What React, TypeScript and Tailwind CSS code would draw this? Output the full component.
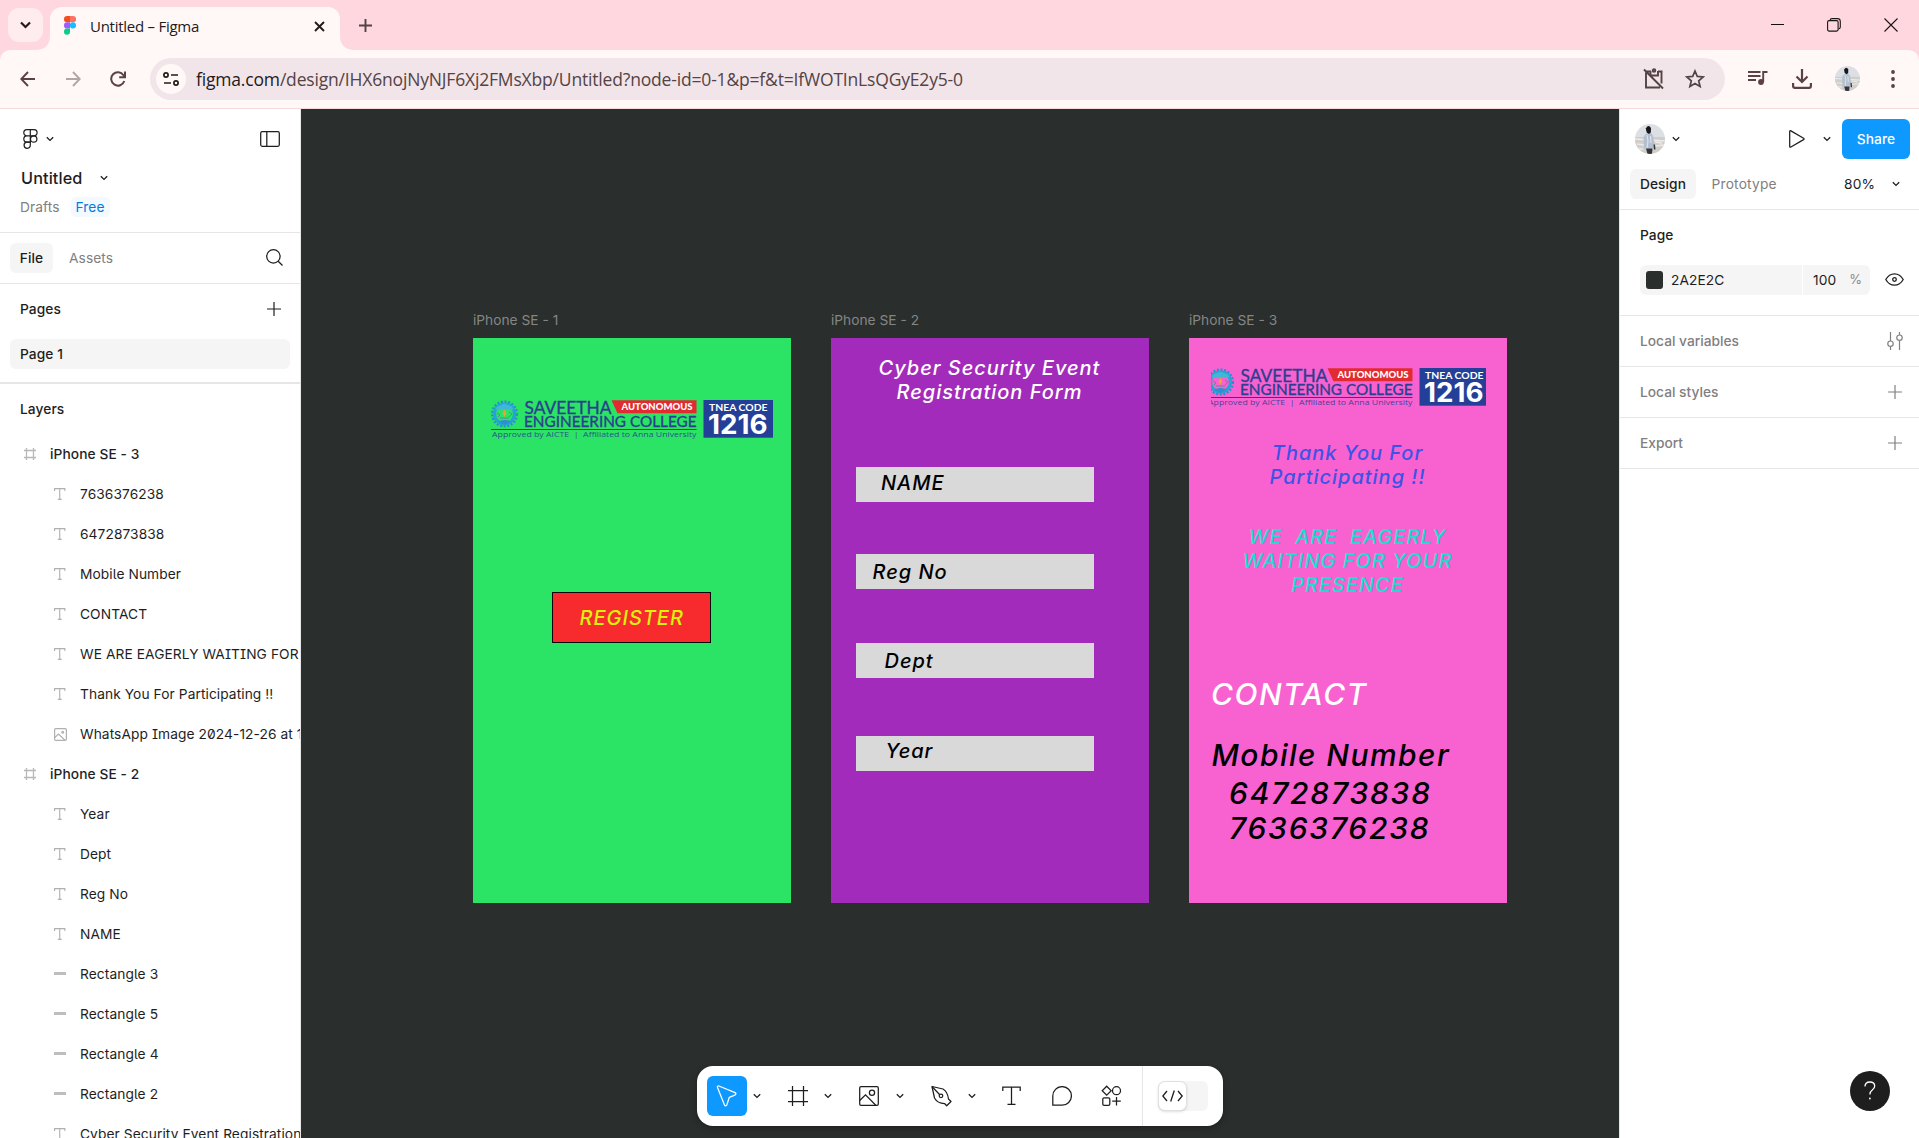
import React from "react";

type IconProps = { className?: string };

const Chevron = ({ className = "" }: IconProps) => (
  <svg width="8" height="6" viewBox="0 0 8 6" fill="none" stroke="currentColor" strokeWidth="1.3" className={className}>
    <path d="M0.8 1.2 4 4.4 7.2 1.2" />
  </svg>
);

const Plus = ({ className = "" }: IconProps) => (
  <svg width="14" height="14" viewBox="0 0 14 14" fill="none" stroke="currentColor" strokeWidth="1.2" className={className}>
    <path d="M7 0v14M0 7h14" />
  </svg>
);

const Avatar = ({ size, id }: { size: number; id: string }) => (
  <svg width={size} height={size} viewBox="0 0 30 30">
    <defs>
      <clipPath id={id}>
        <circle cx="15" cy="15" r="15" />
      </clipPath>
    </defs>
    <g clipPath={`url(#${id})`}>
      <rect width="30" height="30" fill="#dcdfe4" />
      <rect y="13" width="30" height="17" fill="#d0cecb" />
      <path d="M0 15 30 17M2 20 10 21M20 22 30 21M20 18 27 19M0 25h8" stroke="#ecebe9" strokeWidth="1.3" />
      <path d="M8.500 14Q9 10.500 12 9.500L15.500 9Q18 10 18.500 14L19.500 24.500H9Z" fill="#b4c0cf" />
      <path d="M12 11 13 17 12 24M15.500 12 16 19" stroke="#dde5ee" strokeWidth="1.100" fill="none" />
      <path d="M10.800 4.500Q13.500 0 16 4L15.800 8.500 14 10 11.700 8.500Z" fill="#17181c" />
      <path d="M11 24.500H17.500L17 30H12.500ZM18.500 20.500 20 20.500 20.500 25.500 19 25.500Z" fill="#33353b" />
    </g>
  </svg>
);

function TabStrip() {
  return (
    <div className="flex h-[50px] w-full bg-[#ffd7de]">
      <div className="ml-2 mt-2 flex h-[34px] w-[35px] items-center justify-center rounded-[11px] bg-[#ffecee] text-[#231a1c]">
        <svg width="11" height="8" viewBox="0 0 11 8" fill="none" stroke="currentColor" strokeWidth="2.200">
          <path d="M1 1.500 5.500 6 10 1.500" />
        </svg>
      </div>
      <svg width="15" height="15" viewBox="0 0 15 15" className="-ml-2 mt-[35px]" fill="#fff8f6">
        <path d="M15 0V15H0Q15 15 15 0Z" />
      </svg>
      <div className="mt-[7px] flex h-[43px] w-[290px] items-center rounded-t-[12px] bg-[#fff8f6] pl-[14px] pr-[14px]">
        <svg width="12" height="19" viewBox="0 0 12 19" className="-mt-[6px]">
          <path d="M3.100 0H6V6.300H3.100A3.100 3.150 0 0 1 3.100 0Z" fill="#f24e1e" />
          <path d="M6 0H9A3.100 3.150 0 0 1 9 6.300H6Z" fill="#ff7262" />
          <path d="M3.100 6.300H6V12.600H3.100A3.100 3.150 0 0 1 3.100 6.300Z" fill="#a259ff" />
          <circle cx="9" cy="9.450" r="3.100" fill="#1abcfe" />
          <path d="M3.100 12.600H6V15.800A3 3.100 0 1 1 3.100 12.600Z" fill="#0acf83" />
        </svg>
        <span className="-mt-[5px] ml-[14px] whitespace-nowrap font-['Open_Sans'] text-[15px] tracking-[-0.26px] text-[#231a1c]">
          Untitled – Figma
        </span>
        <svg width="11" height="11" viewBox="0 0 11 11" className="-mt-[4px] ml-auto mr-px" stroke="#231a1c" strokeWidth="1.900">
          <path d="M1 1 10 10M10 1 1 10" />
        </svg>
      </div>
      <svg width="15" height="15" viewBox="0 0 15 15" className="mt-[35px]" fill="#fff8f6">
        <path d="M0 0V15H15Q0 15 0 0Z" />
      </svg>
      <svg width="13" height="13" viewBox="0 0 13 13" className="ml-[4px] mt-[19px]" stroke="#534345" strokeWidth="1.900">
        <path d="M6.500 0V13M0 6.500H13" />
      </svg>
      <div className="ml-auto mr-[21px] mt-[18px] flex h-[13px] items-center">
        <svg width="13" height="13" viewBox="0 0 13 13" stroke="#111" strokeWidth="1">
          <path d="M0 6.500H13" />
        </svg>
        <svg width="14" height="14" viewBox="0 0 14 14" className="ml-[43px]" fill="none" stroke="#1a1516" strokeWidth="1.100">
          <rect x="0.600" y="2.600" width="10.500" height="10.500" rx="1.500" />
          <path d="M3 2.500Q3.200 0.600 5 0.600H10.500Q13.300 0.600 13.300 3.400V9Q13.300 10.800 11.500 11" />
        </svg>
        <svg width="14" height="14" viewBox="0 0 14 14" className="ml-[43px]" stroke="#1a1516" strokeWidth="1.100">
          <path d="M0.500 0.500 13.500 13.500M13.500 0.500 0.500 13.500" />
        </svg>
      </div>
    </div>
  );
}

function AddressBar() {
  return (
    <div className="h-[59px] w-full bg-[#ffd7de]">
      <div className="flex h-[59px] items-center rounded-t-[10px] border-b border-[#f5dadd] bg-[#fff8f6]">
        <svg width="16" height="16" viewBox="0 0 16 16" className="-mt-px ml-5" fill="none" stroke="#5b4045" strokeWidth="1.900">
          <path d="M15 8H1.500M8 1 1.300 8 8 15" />
        </svg>
        <svg width="16" height="16" viewBox="0 0 16 16" className="-mt-px ml-[29px]" fill="none" stroke="#b3a5a6" strokeWidth="1.900">
          <path d="M1 8H14.500M8 1 14.700 8 8 15" />
        </svg>
        <svg width="16" height="16" viewBox="0 0 16 16" className="-mt-px ml-[29px]" fill="none" stroke="#5b4045" strokeWidth="2">
          <path d="M14.300 10A6.700 6.700 0 1 1 13.500 4.200L15 6" />
          <path d="M15 0.500V6.300H9.200" />
        </svg>
        <div className="ml-6 flex h-[42px] w-[1575px] items-center rounded-full bg-[#f2e5e9] pl-[6px]">
          <div className="flex h-[30px] w-[30px] items-center justify-center rounded-full bg-[#fff8f6]">
            <svg width="16" height="14" viewBox="0 0 16 14" fill="none" stroke="#231a1c" strokeWidth="1.700">
              <circle cx="3" cy="3" r="2.100" />
              <path d="M8 3H15M1 11H8" />
              <circle cx="13" cy="11" r="2.100" />
            </svg>
          </div>
          <span className="ml-[10px] whitespace-nowrap font-['Open_Sans'] text-[17.500px] tracking-[-0.175px] text-[#534345]">
            <span className="text-[#231a1c]">figma.com</span>/design/IHX6nojNyNJF6Xj2FMsXbp/Untitled?node-id=0-1&amp;p=f&amp;t=IfWOTInLsQGyE2y5-0
          </span>
          <svg width="22" height="22" viewBox="0 0 22 22" className="ml-auto" fill="none" stroke="#534345" strokeWidth="1.900">
            <path d="M8 3.500H3.500M3 4.500V19.500H17M18.500 4V15.500M15 3.500H19.500M7.500 3V7.500H15V3M1 1.500 20 20.500" />
            <circle cx="11" cy="2.500" r="1.300" />
          </svg>
          <svg width="20" height="20" viewBox="0 0 20 20" className="ml-[20px] mr-5" fill="none" stroke="#534345" strokeWidth="1.700">
            <path d="M10 2 12.300 7.400 18.200 7.900 13.700 11.800 15.100 17.500 10 14.400 4.900 17.500 6.300 11.800 1.800 7.900 7.700 7.400Z" />
          </svg>
        </div>
        <svg width="20" height="16" viewBox="0 0 20 16" className="-mt-[3px] ml-[23px]" fill="none" stroke="#5b4045" strokeWidth="1.900">
          <path d="M0 2H12.500M0 6H12.500M0 10H8M15.200 12V2H19.500" />
          <circle cx="13" cy="12" r="2.900" fill="#5b4045" stroke="none" />
        </svg>
        <svg width="20" height="20" viewBox="0 0 20 20" className="-mt-px ml-6" fill="none" stroke="#5b4045" strokeWidth="2.200">
          <path d="M10 0V12M4.500 7.500 10 13 15.500 7.500M1.100 14V17Q1.100 18.900 3 18.900H17Q18.900 18.900 18.900 17V14" />
        </svg>
        <div className="-mt-[2px] ml-[23px]">
          <Avatar size={25} id="toolbar-avatar" />
        </div>
        <svg width="4" height="18" viewBox="0 0 4 18" className="-mt-px ml-[31px]" fill="#5b4045">
          <circle cx="2" cy="2" r="1.900" />
          <circle cx="2" cy="9" r="1.900" />
          <circle cx="2" cy="16" r="1.900" />
        </svg>
      </div>
    </div>
  );
}

type Layer = { kind: "frame" | "text" | "image" | "rect"; name: string };

const layers: Layer[] = [
  { kind: "frame", name: "iPhone SE - 3" },
  { kind: "text", name: "7636376238" },
  { kind: "text", name: "6472873838" },
  { kind: "text", name: "Mobile Number" },
  { kind: "text", name: "CONTACT" },
  { kind: "text", name: "WE ARE EAGERLY WAITING FOR YOUR PRESENCE" },
  { kind: "text", name: "Thank You For Participating !!" },
  { kind: "image", name: "WhatsApp Image 2024-12-26 at 11.50.07" },
  { kind: "frame", name: "iPhone SE - 2" },
  { kind: "text", name: "Year" },
  { kind: "text", name: "Dept" },
  { kind: "text", name: "Reg No" },
  { kind: "text", name: "NAME" },
  { kind: "rect", name: "Rectangle 3" },
  { kind: "rect", name: "Rectangle 5" },
  { kind: "rect", name: "Rectangle 4" },
  { kind: "rect", name: "Rectangle 2" },
  { kind: "text", name: "Cyber Security Event Registration Form" },
];

function LayerIcon({ kind }: { kind: Layer["kind"] }) {
  if (kind === "frame")
    return (
      <svg width="12" height="12" viewBox="0 0 12 12" stroke="#b8b8b8" strokeWidth="1.300">
        <path d="M2.500 0V12M9.500 0V12M0 2.500H12M0 9.500H12" />
      </svg>
    );
  if (kind === "text")
    return (
      <svg width="12" height="12" viewBox="0 0 12 12" fill="none" stroke="#b0b0b0" strokeWidth="1.100">
        <path d="M0.600 3V0.600H10.900V3M5.750 0.600V11.400M3.800 11.400H7.700" />
      </svg>
    );
  if (kind === "image")
    return (
      <svg width="13" height="13" viewBox="0 0 13 13" fill="none" stroke="#b0b0b0" strokeWidth="1.200">
        <rect x="0.600" y="0.600" width="11.800" height="11.800" rx="1.200" />
        <path d="M0.800 9.500 4.500 6 11 12.300" />
        <circle cx="8.700" cy="4.200" r="0.900" />
      </svg>
    );
  return <div className="mt-[-2px] h-[3px] w-3 bg-[#bdbdbd]" />;
}

function LeftPanel() {
  return (
    <aside className="flex h-full w-[301px] shrink-0 flex-col overflow-hidden border-r border-[#e6e6e6] bg-white font-['Inter'] text-[13.750px] tracking-[0.08px] text-[#1e1e1e]">
      <div className="h-[124px] shrink-0 border-b border-[#e6e6e6]">
        <div className="mt-5 flex h-[20px] items-center pl-[23px] pr-5">
          <svg width="15" height="20" viewBox="0 0 15 20" fill="none" stroke="#1e1e1e" strokeWidth="1.200">
            <path d="M7.300 0.700H3.900A3.100 3.100 0 0 0 3.900 6.900H7.300ZM7.300 0.700H11A3.100 3.100 0 0 1 11 6.900H7.300ZM7.300 6.900H3.900A3.100 3.100 0 0 0 3.900 13.100H7.300Z" />
            <path d="M3.900 13.100A3.100 3.100 0 1 0 7.300 16.100V13.100H3.900" />
            <circle cx="10.700" cy="10" r="3.200" />
          </svg>
          <Chevron className="ml-2" />
          <svg width="20" height="16" viewBox="0 0 20 16" className="ml-auto" fill="none" stroke="#1e1e1e" strokeWidth="1.250">
            <rect x="0.700" y="0.700" width="18.600" height="14.600" rx="1.500" />
            <path d="M6.800 0.700V15.300" />
          </svg>
        </div>
        <div className="mt-[19px] flex h-5 items-center pl-[21px]">
          <span className="text-[16.250px] font-[550] tracking-[0.1px]">Untitled</span>
          <Chevron className="ml-[18px]" />
        </div>
        <div className="mt-[9px] flex h-5 items-center pl-5">
          <span className="text-[#808080]">Drafts</span>
          <span className="ml-[11px] flex h-5 items-center rounded-[5px] bg-[#f2f9ff] px-[5px] text-[#007be5]">Free</span>
        </div>
      </div>
      <div className="flex h-[51px] shrink-0 items-center border-b border-[#e6e6e6] pl-[10px] pr-[17px]">
        <span className="flex h-[30px] w-[43px] items-center justify-center rounded-[6px] bg-[#f5f5f5] font-[550]">File</span>
        <span className="ml-4 text-[#808080]">Assets</span>
        <svg width="17" height="17" viewBox="0 0 17 17" className="-mt-[2px] ml-auto" fill="none" stroke="#1e1e1e" strokeWidth="1.250">
          <circle cx="7.400" cy="7.400" r="6.700" />
          <path d="M12.200 12.200 16.500 16.500" />
        </svg>
      </div>
      <div className="flex h-[50px] shrink-0 items-center justify-between pl-5 pr-[19px] font-[550]">
        Pages
        <Plus />
      </div>
      <div className="mx-[10px] mt-[5px] flex h-[30px] shrink-0 items-center rounded-[6px] bg-[#f5f5f5] pl-[10px] font-[450]">Page 1</div>
      <div className="mt-[13px] h-[2px] shrink-0 bg-[#e6e6e6]" />
      <div className="flex h-[50px] shrink-0 items-center pl-5 font-[550]">Layers</div>
      <div className="flex w-[480px] flex-col [font-feature-settings:'ss02']">
        {layers.map((l) => (
          <div key={l.name} className="flex h-10 shrink-0 items-center whitespace-nowrap">
            <div className={l.kind === "frame" ? "flex w-[50px] shrink-0 items-center pl-6" : "flex w-20 shrink-0 items-center pl-[54px]"}>
              <LayerIcon kind={l.kind} />
            </div>
            <span className={l.kind === "frame" ? "font-[550]" : "font-normal"}>{l.name}</span>
          </div>
        ))}
      </div>
    </aside>
  );
}

function RightPanel() {
  return (
    <aside className="relative flex h-full w-[300px] shrink-0 flex-col border-l border-[#e6e6e6] bg-white font-['Inter'] text-[13.750px] tracking-[0.08px] text-[#1e1e1e]">
      <div className="flex h-[60px] items-center pl-[15px] pr-[9px]">
        <Avatar size={30} id="panel-avatar" />
        <Chevron className="ml-[7px]" />
        <svg width="16" height="18" viewBox="0 0 16 18" className="ml-auto" fill="none" stroke="#1e1e1e" strokeWidth="1.250" strokeLinejoin="round">
          <path d="M0.700 1.500Q0.700 0.300 1.900 0.900L14.600 8.200Q15.600 8.900 14.600 9.600L1.900 17Q0.700 17.600 0.700 16.500Z" />
        </svg>
        <Chevron className="ml-[18px]" />
        <span className="ml-[11px] flex h-10 w-[68px] items-center justify-center rounded-[6px] bg-[#0d99ff] font-[550] text-white">Share</span>
      </div>
      <div className="flex h-[41px] shrink-0 border-b border-[#e6e6e6] pl-[10px] pr-[19px]">
        <span className="flex h-[30px] w-[66px] items-center justify-center rounded-[6px] bg-[#f5f5f5] font-[550]">Design</span>
        <span className="ml-[15.500px] mt-[5px] tracking-[0.200px] text-[#808080]">Prototype</span>
        <span className="ml-auto mt-[5px]">80%</span>
        <Chevron className="ml-[17px] mt-[12px]" />
      </div>
      <div className="h-[106px] shrink-0 border-b border-[#e6e6e6] pl-5 pr-[15px]">
        <div className="mt-[15px] font-[550]">Page</div>
        <div className="mt-[19px] flex h-[30px] items-center">
          <div className="flex h-[30px] w-[162px] items-center rounded-l-[6px] bg-[#f5f5f5] pl-[6px]">
            <span className="h-[18px] w-[17px] rounded-[3px] bg-[#2a2e2c]" />
            <span className="ml-2 mt-px">2A2E2C</span>
          </div>
          <div className="ml-px flex h-[30px] w-[67px] items-center justify-between rounded-r-[6px] bg-[#f5f5f5] pl-[10px] pr-[8px]">
            <span className="mt-px">100</span>
            <span className="mt-px text-[13px] text-[#8a8a8a]">%</span>
          </div>
          <svg width="19" height="13" viewBox="0 0 19 13" className="ml-auto" fill="none" stroke="#1e1e1e" strokeWidth="1.300">
            <path d="M0.800 6.500Q4 0.800 9.500 0.800T18.200 6.500Q15 12.200 9.500 12.200T0.800 6.500Z" />
            <circle cx="9.500" cy="6.500" r="1.800" />
          </svg>
        </div>
      </div>
      <div className="flex h-[51px] shrink-0 items-center justify-between border-b border-[#e6e6e6] pl-5 pr-4 text-[#808080]">
        <span className="font-[450] tracking-normal">Local variables</span>
        <svg width="16" height="18" viewBox="0 0 16 18" fill="none" stroke="currentColor" strokeWidth="1.200">
          <path d="M3.500 0V9M3.500 14.500V18M12.500 0V3M12.500 8.500V18" />
          <circle cx="3.500" cy="11.700" r="2.700" />
          <circle cx="12.500" cy="5.700" r="2.700" />
        </svg>
      </div>
      <div className="flex h-[51px] shrink-0 items-center justify-between border-b border-[#e6e6e6] pl-5 pr-[17px] text-[#808080]">
        <span className="font-[450] tracking-normal">Local styles</span>
        <Plus />
      </div>
      <div className="flex h-[51px] shrink-0 items-center justify-between border-b border-[#e6e6e6] pl-5 pr-[17px] text-[#808080]">
        <span className="font-[450] tracking-normal">Export</span>
        <Plus />
      </div>
      <div className="absolute bottom-[27px] right-[29px] flex h-10 w-10 items-center justify-center rounded-full bg-[#1e1e1e]">
        <svg width="12" height="20" viewBox="0 0 12 20" fill="none" stroke="white" strokeWidth="1.300">
          <path d="M1 5.500Q1 1 5.800 1T10.700 5Q10.700 7.300 8.300 9T5.900 13.500" />
          <circle cx="5.900" cy="17.500" r="0.900" fill="white" stroke="none" />
        </svg>
      </div>
    </aside>
  );
}

function CollegeLogo() {
  return (
    <svg width="282" height="40" viewBox="0 0 282 40">
      <circle cx="13.500" cy="14" r="12.300" fill="none" stroke="#2a8fd0" strokeWidth="2.600" strokeDasharray="2 1.600" />
      <circle cx="13.500" cy="14" r="10" fill="none" stroke="#25a3d6" strokeWidth="3.200" />
      <path d="M4.500 9.500H22.500L21 6.500 13.500 3.500 6 6.500Z" fill="#3fb7d8" />
      <path d="M7 21.500Q13.500 18.500 20 21.500L13.500 25Z" fill="#2d8fd2" />
      <path d="M13.500 9.500 15.500 13.500 13.500 17 11.500 13.500Z" fill="#e8a33c" />
      <path d="M6 13 9 15 7 17M18 12 21 14 18 17M9 18H18" stroke="#4f8f9c" strokeWidth="1" fill="none" />
      <g fill="#2a3f8f" fontFamily="Lato">
        <text x="33.500" y="13.700" fontSize="18" fontWeight="400" stroke="#2a3f8f" strokeWidth="0.350" textLength="87" lengthAdjust="spacingAndGlyphs">SAVEETHA</text>
        <text x="33" y="26.900" fontSize="15.300" fontWeight="400" stroke="#2a3f8f" strokeWidth="0.350" textLength="172.500" lengthAdjust="spacingAndGlyphs">ENGINEERING COLLEGE</text>
      </g>
      <path d="M0 29.500H205.500" stroke="#2a3f8f" strokeWidth="1" />
      <text x="1" y="37.300" fontSize="7.600" fontWeight="500" fill="#2a3f8f" fillOpacity="0.900" fontFamily="Open Sans" textLength="204.500" lengthAdjust="spacingAndGlyphs" xmlSpace="preserve">Approved by AICTE&#160; |&#160; Affiliated to Anna University</text>
      <path d="M120.500 0.300H205.500V13.300H126.500Z" fill="#e22b31" />
      <text x="130.500" y="10" fontSize="9.300" fontWeight="900" fill="white" fontFamily="Lato" textLength="71" lengthAdjust="spacingAndGlyphs">AUTONOMOUS</text>
      <rect x="212.500" y="0" width="69.500" height="37.700" fill="#233f97" />
      <text x="218" y="10.600" fontSize="9.500" fontWeight="700" fill="white" fontFamily="Lato" textLength="58.500" lengthAdjust="spacingAndGlyphs">TNEA CODE</text>
      <text x="217" y="33.800" fontSize="27" fontWeight="750" fill="white" fontFamily="Inter" textLength="59.500" lengthAdjust="spacingAndGlyphs">1216</text>
    </svg>
  );
}

function BottomToolbar() {
  return (
    <div className="absolute left-[396px] top-[957px] flex h-[60px] w-[526px] items-center rounded-[16px] bg-white text-[#1e1e1e] shadow-[0_2px_6px_rgba(0,0,0,0.3)]">
      <div className="ml-[10px] flex h-10 w-10 shrink-0 items-center justify-center rounded-[6px] bg-[#0d99ff]">
        <svg width="22" height="22" viewBox="0 0 21 22" fill="none" stroke="white" strokeWidth="1.250" strokeLinejoin="round">
          <path d="M1 2.400Q0.600 0.600 2.400 1L18.600 7.600Q20.200 8.500 18.800 9.800L12.800 12.300 10.300 20Q9.400 21.600 8.100 20.300Z" />
        </svg>
      </div>
      <Chevron className="ml-[6px] shrink-0" />
      <svg width="20" height="20" viewBox="0 0 20 20" className="ml-[27px] shrink-0" fill="none" stroke="currentColor" strokeWidth="1.250">
        <path d="M4.500 0V20M15.500 0V20M0 4.500H20M0 15.500H20" />
      </svg>
      <Chevron className="ml-4 shrink-0" />
      <svg width="20" height="20" viewBox="0 0 20 20" className="ml-[26.500px] shrink-0" fill="none" stroke="currentColor" strokeWidth="1.250">
        <rect x="0.700" y="0.700" width="18.600" height="18.600" rx="1.300" />
        <path d="M0.700 14.500 6.500 8.800 16.800 19.300" />
        <circle cx="13" cy="6.700" r="2.600" />
      </svg>
      <Chevron className="ml-[17.500px] shrink-0" />
      <svg width="21" height="22" viewBox="0 0 21 22" className="ml-[27px] shrink-0" fill="none" stroke="currentColor" strokeWidth="1.250" strokeLinejoin="round">
        <path d="M1 1.500 12 4Q16.500 6.500 17.500 14L20 16.500 15.700 20.800 13.500 18.500Q6.500 18.500 3.500 13Z" />
        <path d="M1 1.500 8.500 9.500" />
        <circle cx="10" cy="10.800" r="1.800" />
      </svg>
      <Chevron className="ml-[15.500px] shrink-0" />
      <svg width="19" height="20" viewBox="0 0 19 20" className="ml-[26.500px] shrink-0" fill="none" stroke="currentColor" strokeWidth="1.250">
        <path d="M0.800 5V1.200H18.200V5M9.500 1.200V18.300M5.500 18.300H13.500" />
      </svg>
      <svg width="20" height="20" viewBox="0 0 20 20" className="ml-[31px] shrink-0" fill="none" stroke="currentColor" strokeWidth="1.250">
        <path d="M0.800 19V10A9.300 9.300 0 1 1 10.100 19.200H0.800Z" />
      </svg>
      <svg width="21" height="22" viewBox="0 0 20 22" className="ml-[29px] shrink-0" fill="none" stroke="currentColor" strokeWidth="1.250">
        <path d="M5.200 1.200 9.700 5.700 5.200 10.200 0.700 5.700ZM15 12V20.500M10.700 16.200H19.300" />
        <circle cx="15" cy="5.700" r="4" />
        <rect x="1.300" y="12.800" width="7" height="7.500" rx="1.300" />
      </svg>
      <div className="ml-5 h-[60px] w-px bg-[#e6e6e6]" />
      <div className="ml-[15px] flex h-[30px] w-[50px] shrink-0 rounded-[6px] bg-[#f5f5f5]">
        <div className="flex h-[30px] w-[29px] items-center justify-center rounded-[7px] border border-[#e0e0e0] bg-white shadow-sm">
          <svg width="21" height="12" viewBox="-1 0 21 12" fill="none" stroke="currentColor" strokeWidth="1.300" className="shrink-0">
            <path d="M4 1 -0.200 6 4 11M15 1 19.200 6 15 11M11.300 0.500 7.700 11.500" />
          </svg>
        </div>
      </div>
    </div>
  );
}

const text20 = "absolute whitespace-nowrap font-['Inter'] text-[20px] font-[480] italic leading-6 tracking-[0.980px]";
const text30 = "absolute whitespace-nowrap font-['Inter'] text-[30px] font-[480] italic leading-9";
const label = "absolute top-[-27px] whitespace-nowrap font-['Inter'] text-[13.750px] leading-[18px] text-[#848685]";

function Canvas() {
  return (
    <main className="relative h-full min-w-0 flex-1 overflow-hidden bg-[#2a2e2c]">
      <section className="absolute left-[171.500px] top-[229px] h-[565px] w-[318.900px] bg-[#2be364]">
        <span className={`${label} left-[0.500px]`}>iPhone SE - 1</span>
        <div className="absolute left-[18px] top-[62px]">
          <CollegeLogo />
        </div>
        <div className="absolute left-[79.500px] top-[253.500px] h-[51px] w-[159px] border border-black bg-[#f72b2e]" />
        <span className={`${text20} left-[107px] top-[267.500px] text-[#d8f20a]`}>REGISTER</span>
      </section>
      <section className="absolute left-[530px] top-[229px] h-[565px] w-[318.400px] bg-[#a32bbb]">
        <span className={`${label} left-0`}>iPhone SE - 2</span>
        <div className={`${text20} left-0 top-[18px] w-[317px] text-center text-white`}>
          Cyber Security Event
          <br />
          Registration Form
        </div>
        <div className="absolute left-[25px] top-[129px] h-[35px] w-[238px] bg-[#d9d9d9]" />
        <div className="absolute left-[25px] top-[215.500px] h-[35px] w-[238px] bg-[#d9d9d9]" />
        <div className="absolute left-[25px] top-[305px] h-[35px] w-[238px] bg-[#d9d9d9]" />
        <div className="absolute left-[25px] top-[397.500px] h-[35px] w-[238px] bg-[#d9d9d9]" />
        <span className={`${text20} left-[50px] top-[133px] text-black`}>NAME</span>
        <span className={`${text20} left-[41.500px] top-[222px] text-black`}>Reg No</span>
        <span className={`${text20} left-[53.500px] top-[311px] text-black`}>Dept</span>
        <span className={`${text20} left-[54.500px] top-[401px] text-black`}>Year</span>
      </section>
      <section className="absolute left-[888px] top-[229px] h-[565px] w-[318.400px] bg-[#f862d0]">
        <span className={`${label} left-0`}>iPhone SE - 3</span>
        <div className="absolute left-[22px] top-[30px] w-[274.500px] overflow-hidden">
          <div className="-ml-[4px] w-[282px]">
            <CollegeLogo />
          </div>
        </div>
        <div className={`${text20} left-0 top-[102.500px] w-[317px] text-center text-[#3d53e6]`}>
          Thank You For
          <br />
          Participating !!
        </div>
        <div className={`${text20} left-0 top-[187px] w-[317px] text-center text-[#22dccf]`}>
          WE&nbsp; ARE&nbsp; EAGERLY
          <br />
          WAITING FOR YOUR
          <br />
          PRESENCE
        </div>
        <span className={`${text30} left-[22px] top-[338px] tracking-[1.450px] text-white`}>CONTACT</span>
        <span className={`${text30} left-[22.500px] top-[399px] tracking-[1.450px] text-black`}>Mobile Number</span>
        <span className={`${text30} left-[40px] top-[437px] tracking-[1.780px] text-black`}>6472873838</span>
        <span className={`${text30} left-[40px] top-[472px] tracking-[1.780px] text-black`}>7636376238</span>
      </section>
      <BottomToolbar />
    </main>
  );
}

export default function App() {
  return (
    <div className="flex h-[1138px] w-[1919px] flex-col overflow-hidden bg-white font-['Inter',sans-serif]">
      <TabStrip />
      <AddressBar />
      <div className="flex min-h-0 flex-1">
        <LeftPanel />
        <Canvas />
        <RightPanel />
      </div>
    </div>
  );
}
